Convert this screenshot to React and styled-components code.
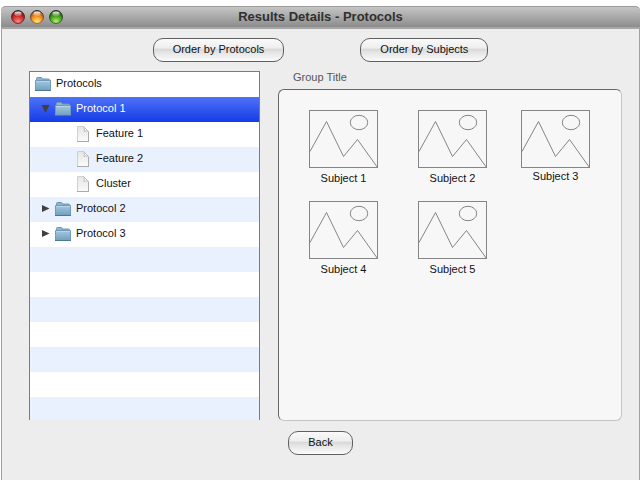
import React from "react";
import styled, { createGlobalStyle, css } from "styled-components";

const GlobalStyle = createGlobalStyle`
  *, *::before, *::after { box-sizing: border-box; }
  body {
    margin: 0;
    background: #fff;
    color: #111;
    font: 11px/14px "Liberation Sans", Arial, sans-serif;
  }
`;

const Window = styled.div`
  display: flex;
  flex-direction: column;
  min-height: calc(100vh - 6px);
  margin: 6px 0 0 1px;
  border: solid #a0a0a0;
  border-width: 0 1px;
  border-radius: 5px 5px 0 0;
  background: #ededed;
`;

const TitleBar = styled.header`
  display: grid;
  grid-template-columns: 64px 1fr 64px;
  align-items: center;
  height: 23px;
  margin: 0 -1px;
  border-top: 1px solid #9a9a9a;
  border-bottom: 2px solid #a6a6a6;
  border-radius: 5px 5px 0 0;
  background: linear-gradient(#c5c5c5, #8c8c8c);
`;

const Title = styled.h1`
  margin: 0;
  color: #303030;
  font-size: 13px;
  line-height: 18px;
  text-align: center;
`;

const WindowControls = styled.div`
  display: flex;
  gap: 5px;
  padding-left: 10px;
`;

const ControlButton = styled.button`
  width: 14px;
  height: 14px;
  padding: 0;
  border: 0;
  background: none;

  svg { display: block; }
`;

const Toolbar = styled.div`
  display: flex;
  justify-content: center;
  gap: 76px;
  padding: 9px 0;
`;

const PillButton = styled.button`
  height: 24px;
  padding: 0 19px 2px;
  border: 1px solid #606060;
  border-radius: 10px;
  background: linear-gradient(#fafafa 0%, #eeeeee 40%, #d9d9d9 48%, #e4e4e4 60%, #fbfbfb 100%);
  color: #111;
  font: inherit;
`;

const Main = styled.main`
  display: grid;
  flex: 1;
  grid-template-columns: 231fr 344fr;
  column-gap: 18px;
  padding: 0 17px 0 27px;
`;

const Tree = styled.ul`
  margin: 0 0 1px;
  padding: 0;
  border: solid #7c7c7c;
  border-width: 1px 1px 0;
  background: repeating-linear-gradient(#fff 0 25px, #eaf1fe 25px 50px);
  list-style: none;
`;

const TreeRow = styled.li`
  display: flex;
  align-items: center;
  gap: 5px;
  height: 25px;
  padding-bottom: 2px;
  padding-left: ${(p) => [5, 11, 45][p.$level]}px;
  ${(p) =>
    p.$selected &&
    css`
      background: linear-gradient(#4f72f8, #153be6);
      color: #fff;
    `}

  svg { flex: none; }
`;

const RowLabel = styled.span`
  padding-bottom: 2px;
`;

const GroupBox = styled.section`
  display: flex;
  flex-direction: column;
`;

const GroupTitle = styled.h2`
  margin: 0 0 6px;
  padding-left: 15px;
  color: #555;
  font-size: 11px;
  font-weight: normal;
  line-height: 12px;
`;

const GroupPanel = styled.div`
  display: grid;
  flex: 1;
  grid-template-columns: 109px 103px 69px;
  grid-auto-rows: 91px;
  align-content: start;
  padding: 20px 30px;
  border: 1px solid;
  border-color: #666 #c4c4c4 #c4c4c4 #666;
  border-radius: 6px;
  background: #f7f7f7;
`;

const Subject = styled.figure`
  width: 69px;
  margin: 0;
  text-align: center;

  svg { display: block; }
`;

const SubjectName = styled.figcaption`
  margin-top: ${(p) => (p.$tight ? 1 : 3)}px;
`;

const Footer = styled.footer`
  display: flex;
  justify-content: center;
  padding: 10px 0 25px;
`;

const LIGHTS = [
  { name: "Close", dark: "#8f1614", mid: "#d63a36", glow: "#ff9088" },
  { name: "Minimize", dark: "#bd5f10", mid: "#f59a2a", glow: "#fff27e" },
  { name: "Zoom", dark: "#256e0c", mid: "#56ad26", glow: "#c4f582" },
];

function Light({ name, dark, mid, glow }) {
  return (
    <ControlButton type="button" aria-label={name}>
      <svg width="14" height="14" viewBox="0 0 14 14">
        <defs>
          <radialGradient id={`body-${name}`} cx="50%" cy="90%" r="75%">
            <stop offset="0" stopColor={glow} />
            <stop offset="0.55" stopColor={mid} />
            <stop offset="1" stopColor={dark} />
          </radialGradient>
          <linearGradient id={`rim-${name}`} x2="0" y2="1">
            <stop offset="0" stopColor="#222" />
            <stop offset="1" stopColor={dark} />
          </linearGradient>
          <linearGradient id={`shine-${name}`} x2="0" y2="1">
            <stop offset="0" stopColor="#fff" stopOpacity="0.95" />
            <stop offset="1" stopColor="#fff" stopOpacity="0.15" />
          </linearGradient>
        </defs>
        <circle cx="7" cy="7" r="6.4" fill={`url(#body-${name})`} stroke={`url(#rim-${name})`} />
        <ellipse cx="7" cy="3.7" rx="3.6" ry="2.3" fill={`url(#shine-${name})`} />
      </svg>
    </ControlButton>
  );
}

function FolderIcon() {
  return (
    <svg width="16" height="16" viewBox="0 0 16 16" aria-hidden="true">
      <defs>
        <linearGradient id="folder-front" x2="0" y2="1">
          <stop offset="0" stopColor="#a6c8dd" />
          <stop offset="1" stopColor="#6f9fc0" />
        </linearGradient>
      </defs>
      <path d="M1.500 5V2.500q0-1 1-1H6q1 0 1 1V3h6.500q1 0 1 1v1z" fill="#8db6d0" stroke="#6c98b4" />
      <path d="M.5 4.500h15v10H.5z" fill="url(#folder-front)" stroke="#6f9ab8" />
      <path d="M1 5.500h14" stroke="#b8d5e6" />
      <path d="M0 14.500h16" stroke="#4f7894" />
    </svg>
  );
}

function FileIcon() {
  return (
    <svg width="16" height="16" viewBox="0 0 16 16" aria-hidden="true">
      <defs>
        <linearGradient id="sheet" x2="0" y2="1">
          <stop offset="0" stopColor="#e6e6e6" />
          <stop offset="1" stopColor="#fafafa" />
        </linearGradient>
      </defs>
      <path d="M2.500 .5h6l5 5v10h-11z" fill="url(#sheet)" stroke="#d0d0d0" />
      <path d="M2 15.500h12M13.500 6v10" stroke="#ababab" fill="none" />
      <path d="M8.500 .5c1 1.500 1 3 .5 5 2-.8 3.500-.5 4.500 0z" fill="#fdfdfd" stroke="#bdbdbd" />
    </svg>
  );
}

function Arrow({ open }) {
  return (
    <svg width="9" height="9" viewBox="0 0 9 9" aria-hidden="true">
      <path d={open ? "M.5 1h8L4.500 9z" : "M1 1l7.500 3.500L1 8z"} fill="#404040" />
    </svg>
  );
}

function Placeholder() {
  return (
    <svg width="69" height="58" viewBox="0 0 69 58" fill="none" stroke="#858585" aria-hidden="true">
      <rect x="0.5" y="0.5" width="68" height="57" />
      <ellipse cx="50" cy="12.500" rx="8.700" ry="7.200" />
      <path d="M1 41.500L17.500 11.500 34.500 46.500 48.500 29.500 68.500 57.500" />
    </svg>
  );
}

const ROWS = [
  { label: "Protocols", level: 0 },
  { label: "Protocol 1", level: 1, open: true, selected: true },
  { label: "Feature 1", level: 2 },
  { label: "Feature 2", level: 2 },
  { label: "Cluster", level: 2 },
  { label: "Protocol 2", level: 1 },
  { label: "Protocol 3", level: 1 },
];

const SUBJECTS = [
  { name: "Subject 1" },
  { name: "Subject 2" },
  { name: "Subject 3", tight: true },
  { name: "Subject 4" },
  { name: "Subject 5" },
];

export default function App() {
  return (
    <>
      <GlobalStyle />
      <Window>
        <TitleBar>
          <WindowControls>
            {LIGHTS.map((light) => (
              <Light key={light.name} {...light} />
            ))}
          </WindowControls>
          <Title>Results Details - Protocols</Title>
        </TitleBar>
        <Toolbar>
          <PillButton type="button">Order by Protocols</PillButton>
          <PillButton type="button">Order by Subjects</PillButton>
        </Toolbar>
        <Main>
          <Tree role="tree" aria-label="Protocols">
            {ROWS.map(({ label, level, open, selected }) => (
              <TreeRow
                key={label}
                role="treeitem"
                aria-level={level + 1}
                aria-selected={Boolean(selected)}
                aria-expanded={level === 1 ? Boolean(open) : undefined}
                $level={level}
                $selected={selected}
              >
                {level === 1 && <Arrow open={open} />}
                {level === 2 ? <FileIcon /> : <FolderIcon />}
                <RowLabel>{label}</RowLabel>
              </TreeRow>
            ))}
          </Tree>
          <GroupBox>
            <GroupTitle>Group Title</GroupTitle>
            <GroupPanel>
              {SUBJECTS.map(({ name, tight }) => (
                <Subject key={name}>
                  <Placeholder />
                  <SubjectName $tight={tight}>{name}</SubjectName>
                </Subject>
              ))}
            </GroupPanel>
          </GroupBox>
        </Main>
        <Footer>
          <PillButton type="button">Back</PillButton>
        </Footer>
      </Window>
    </>
  );
}
